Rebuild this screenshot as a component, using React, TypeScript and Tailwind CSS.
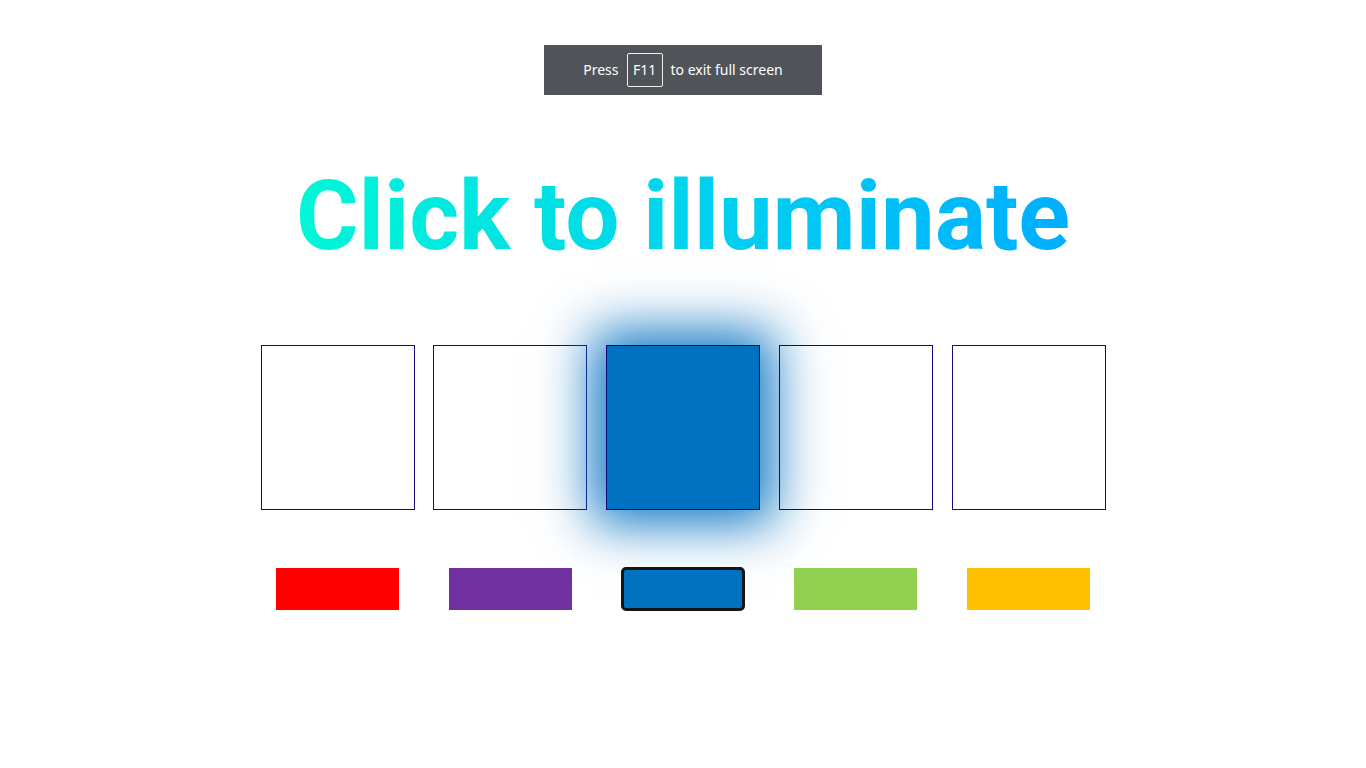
import React, { useState } from 'react';

const colors = [
  { name: 'red', value: '#ff0000' },
  { name: 'purple', value: '#7030a0' },
  { name: 'blue', value: '#0070c0' },
  { name: 'green', value: '#92d050' },
  { name: 'yellow', value: '#ffc000' },
];

const App: React.FC = () => {
  const [lit, setLit] = useState<number | null>(2);
  const [selected, setSelected] = useState(2);
  const color = colors[selected].value;

  return (
    <div className="min-h-screen w-full bg-white flex flex-col items-center font-['Roboto',sans-serif]">
      {/* Fullscreen notice */}
      <div className="mt-[45px] w-[278px] h-[50px] bg-[#505459] flex items-center justify-center gap-[8px] text-white text-[14px] leading-[20px] pb-[1px] font-['Noto_Sans','Open_Sans',sans-serif]">
        <span>Press</span>
        <span className="w-[36px] h-[34px] border border-white/90 rounded-[2px] flex items-center justify-center">F11</span>
        <span>to exit full screen</span>
      </div>

      {/* Title */}
      <h1 className="mt-[73px] text-8xl leading-none font-bold tracking-[-0.1px] bg-gradient-to-r from-[#03f7d6] to-[#00aeff] bg-clip-text text-transparent">
        Click to illuminate
      </h1>

      {/* Boxes */}
      <div className="mt-[81px] flex gap-[18.75px]">
        {colors.map((c, i) => (
          <div
            key={c.name}
            onClick={() => setLit(lit === i ? null : i)}
            className={`w-[154px] h-[165px] border border-[#14087a] cursor-pointer ${
              lit === i ? 'shadow-[0_0_50px_14px_rgba(0,112,192,0.95)]' : ''
            }`}
            style={lit === i ? { backgroundColor: color } : undefined}
          />
        ))}
      </div>

      {/* Colour picker */}
      <div className="mt-[57px] h-[44px] flex items-center gap-[18.75px]">
        {colors.map((c, i) => (
          <div key={c.name} className="w-[154px] flex justify-center">
            <button
              onClick={() => setSelected(i)}
              className={
                selected === i
                  ? 'w-[124px] h-[44px] border-[3px] border-[#151515] rounded-[5px]'
                  : 'w-[123px] h-[42px]'
              }
              style={{ backgroundColor: c.value }}
            />
          </div>
        ))}
      </div>
    </div>
  );
};

export default App;
